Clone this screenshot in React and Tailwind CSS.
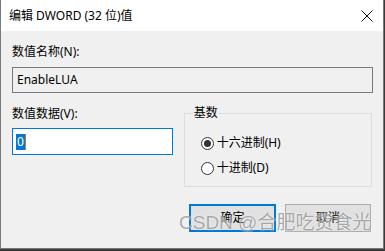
import React from 'react';

const font = { fontFamily: '"Noto Sans", "Noto Sans CJK SC", sans-serif' };

function Radio({ checked, label }) {
	return (
		<div className="flex items-center h-[16px]">
			<span className="w-[13px] h-[13px] rounded-full border border-[#333] bg-white flex items-center justify-center">
				{checked && <span className="w-[7px] h-[7px] rounded-full bg-[#333]" />}
			</span>
			<span className="ml-[3px] text-[12px] text-black leading-[16px]">{label}</span>
		</div>
	);
}

export default function App() {
	return (
		<div className="w-[385px] h-[251px] bg-[#3a3a3a] overflow-hidden" style={font}>
			<div className="relative w-[384px] h-[249px] border-x border-b border-[#7a7a7a] bg-[#f0f0f0] flex flex-col">
				<header className="h-[31px] bg-white flex items-center justify-between pl-[8px] pr-[9px]">
					<span className="text-[12px] text-black leading-[16px]">编辑 DWORD (32 位)值</span>
					<svg width="14" height="14" viewBox="0 0 14 14">
						<path d="M1.5 1.5 L12.5 12.5 M12.5 1.5 L1.5 12.5" stroke="#111" strokeWidth="1" fill="none" />
					</svg>
				</header>
				<main className="flex-1 px-[11px] pt-[13px]">
					<div className="text-[12px] leading-[16px] text-black">数值名称(N):</div>
					<div className="mt-[7px] h-[26px] w-[361px] border border-[#7a7a7a] bg-[#f0f0f0] flex items-center pl-[4px] text-[12px] text-black">
						EnableLUA
					</div>
					<div className="flex mt-[13px]">
						<div className="w-[162px]">
							<div className="text-[12px] leading-[16px] text-black">数值数据(V):</div>
							<div className="mt-[6px] h-[27px] border border-[#0078d7] bg-white flex items-center pl-[3px]">
								<span className="bg-[#0078d7] text-white text-[12px] leading-[16px] px-[1px]">0</span>
								<span className="w-[1px] h-[16px] bg-[#e07020]" />
							</div>
						</div>
						<div className="ml-[11px] w-[190px] pt-[7px]">
							<div className="relative h-[74px] border border-[#dcdcdc] flex flex-col pl-[16px] pt-[21px] gap-[9px]">
								<span className="absolute -top-[9px] left-[8px] px-[1px] bg-[#f0f0f0] text-[12px] leading-[16px] text-black">基数</span>
								<Radio checked label="十六进制(H)" />
								<Radio label="十进制(D)" />
							</div>
						</div>
					</div>
					<div className="flex justify-end mt-[17px] gap-[9px] pr-[1px]">
						<button className="w-[87px] h-[28px] border-2 border-[#0078d7] bg-[#e1e1e1] text-[12px] text-black">确定</button>
						<button className="w-[86px] h-[28px] border border-[#adadad] bg-[#e1e1e1] text-[12px] text-black">取消</button>
					</div>
				</main>
				<span
					className="absolute left-[178px] top-[211px] text-[19px] leading-[24px] text-[#8f8f8f]/75 pointer-events-none [text-shadow:0_0_2px_rgba(255,255,255,0.9)]"
					style={{ fontFamily: '"Liberation Sans", "Noto Sans CJK SC", sans-serif' }}
				>
					CSDN @合肥吃货食光
				</span>
			</div>
		</div>
	);
}
